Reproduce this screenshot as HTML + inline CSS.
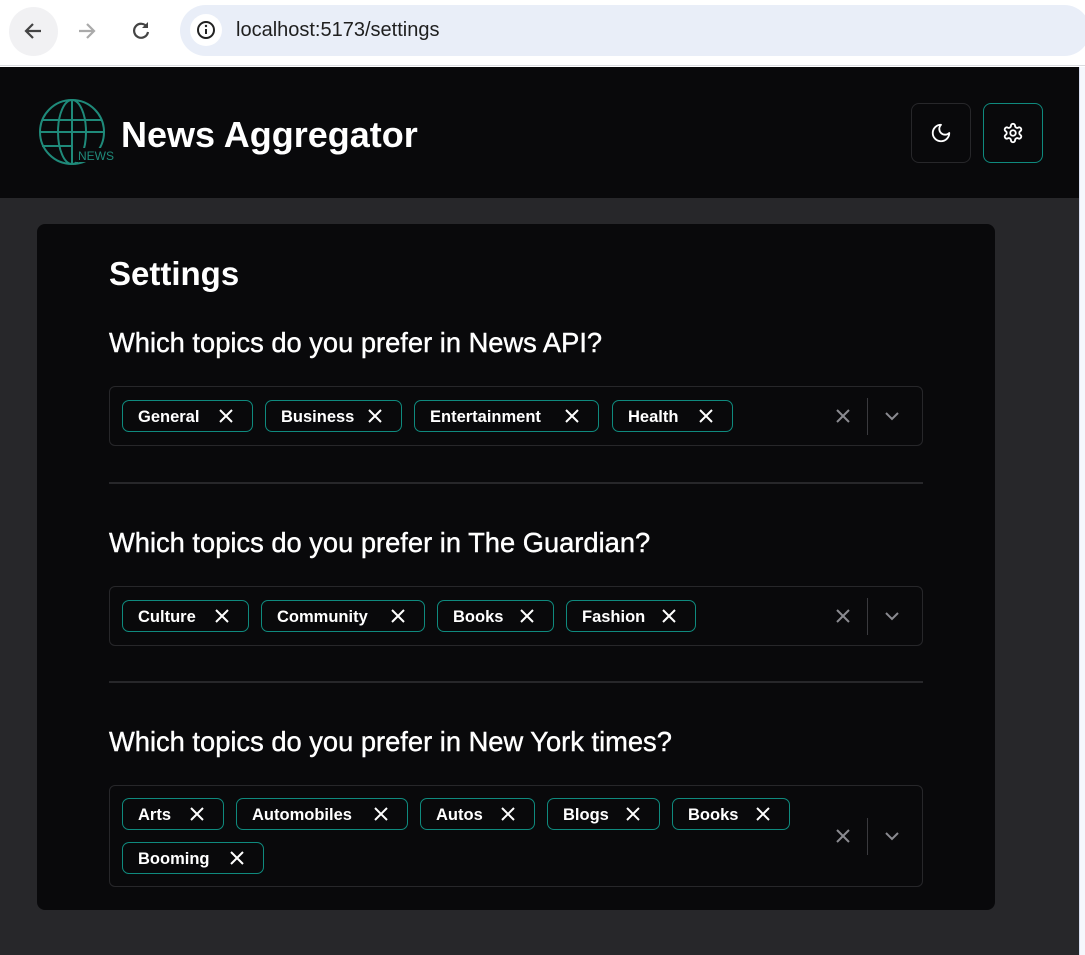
<!DOCTYPE html>
<html><head><meta charset="utf-8"><style>
*{box-sizing:border-box;margin:0;padding:0}
body{width:1085px;height:955px;overflow:hidden;background:#fff;font-family:"Liberation Sans",sans-serif;position:relative}
.chrome{position:absolute;left:0;top:0;width:1085px;height:66px;background:#fff;border-bottom:1px solid #dadce0}
.back{position:absolute;left:9px;top:7px;width:49px;height:49px;border-radius:50%;background:#f1f1f3}
.addr{position:absolute;left:180px;top:5px;width:910px;height:51px;border-radius:26px;background:#e9eef8}
.info{position:absolute;left:190px;top:14px;width:32px;height:32px;border-radius:50%;background:#fff}
.url{position:absolute;left:236px;top:19px;font-size:20px;color:#1f1f1f}
.page{position:absolute;left:0;top:67px;width:1079px;height:888px;background:#27272a}
.strip{position:absolute;left:1079px;top:67px;width:6px;height:888px;background:#f5f7fc;border-left:1px solid #d8def0}
.header{position:absolute;left:0;top:0;width:1079px;height:131px;background:#09090b}
.title{position:absolute;left:121px;top:47px;font-size:36px;font-weight:bold;color:#fff}
.btn{position:absolute;top:36px;width:60px;height:60px;border-radius:8px;border:1px solid #27272a;background:#09090b;display:flex;align-items:center;justify-content:center}
.card{position:absolute;left:37px;top:157px;width:958px;height:686px;background:#09090b;border-radius:8px}
h1{position:absolute;left:72px;top:31px;font-size:33px;color:#fff;font-weight:bold}
h2{position:absolute;left:72px;font-size:27.3px;color:#fff;font-weight:normal;-webkit-text-stroke:0.4px #fff}
.sel{position:absolute;left:72px;width:814px;border:1px solid #27272a;border-radius:6px}
.tag{position:absolute;height:32px;border:1px solid #0f8a7e;border-radius:7px;color:#fff;font-size:16.5px;font-weight:bold;padding-left:15px;line-height:32px}
.tag svg{position:absolute;right:18px;top:7px}
.ctl{position:absolute;right:0;top:0;width:90px;height:100%}
.hr{position:absolute;left:72px;width:814px;height:2px;background:#27272a}
</style></head><body>
<div class="chrome">
<div class="back"></div>
<svg style="position:absolute;left:22px;top:20px" width="22" height="22" viewBox="0 0 22 22"><path d="M19 11H4M11 4l-7 7 7 7" stroke="#444" stroke-width="2.2" fill="none"/></svg>
<svg style="position:absolute;left:76px;top:20px" width="22" height="22" viewBox="0 0 22 22"><path d="M3 11h15M11 4l7 7-7 7" stroke="#aaa" stroke-width="2.2" fill="none"/></svg>
<svg style="position:absolute;left:130px;top:19px" width="22" height="22" viewBox="0 0 22 22"><path d="M17 8A7 7 0 1 0 18 13" stroke="#444" stroke-width="2.2" fill="none"/><path d="M18 3v6h-6" fill="#444"/></svg>
<div class="addr"></div><div class="info"></div>
<svg style="position:absolute;left:196px;top:20px" width="20" height="20" viewBox="0 0 20 20"><circle cx="10" cy="10" r="8" stroke="#222" stroke-width="2" fill="none"/><path d="M10 9v5" stroke="#222" stroke-width="2"/><circle cx="10" cy="6" r="1.2" fill="#222"/></svg>
<div class="url">localhost:5173/settings</div>
</div>
<div class="strip"></div>
<div class="page">
<div class="header">
<svg style="position:absolute;left:39px;top:31px" width="78" height="70" viewBox="0 0 78 70">
<g stroke="#1f8a7a" stroke-width="2" fill="none">
<circle cx="33" cy="34" r="32"/>
<ellipse cx="33" cy="34" rx="14" ry="32"/>
<path d="M33 2v64M3 22h60M1 34h64M3 48h30"/>
</g>
<rect x="37" y="50" width="40" height="14" fill="#09090b"/>
<text x="39" y="62" font-family="Liberation Sans,sans-serif" font-size="12" fill="#1f8a7a">NEWS</text>
</svg>
<div class="title">News Aggregator</div>
<div class="btn" style="left:911px"><svg width="22" height="22" viewBox="0 0 24 24"><path d="M12 3a6 6 0 0 0 9 9 9 9 0 1 1-9-9z" stroke="#fff" stroke-width="2" fill="none" stroke-linejoin="round"/></svg></div>
<div class="btn" style="left:983px;border-color:#0f8a7e"><svg width="22" height="22" viewBox="0 0 24 24" fill="none" stroke="#fff" stroke-width="2" stroke-linejoin="round"><path d="M12.22 2h-.44a2 2 0 0 0-2 2v.18a2 2 0 0 1-1 1.730l-.43.25a2 2 0 0 1-2 0l-.15-.08a2 2 0 0 0-2.73.73l-.22.38a2 2 0 0 0 .73 2.73l.15.1a2 2 0 0 1 1 1.72v.51a2 2 0 0 1-1 1.74l-.15.09a2 2 0 0 0-.73 2.730l.22.38a2 2 0 0 0 2.73.73l.15-.08a2 2 0 0 1 2 0l.43.25a2 2 0 0 1 1 1.73V20a2 2 0 0 0 2 2h.44a2 2 0 0 0 2-2v-.18a2 2 0 0 1 1-1.73l.43-.25a2 2 0 0 1 2 0l.15.08a2 2 0 0 0 2.73-.73l.22-.39a2 2 0 0 0-.73-2.73l-.15-.08a2 2 0 0 1-1-1.74v-.5a2 2 0 0 1 1-1.74l.15-.09a2 2 0 0 0 .73-2.73l-.22-.38a2 2 0 0 0-2.73-.73l-.15.08a2 2 0 0 1-2 0l-.43-.25a2 2 0 0 1-1-1.730V4a2 2 0 0 0-2-2z"/><circle cx="12" cy="12" r="3"/></svg></div>
</div>
<div class="card">
<h1>Settings</h1>
<h2 style="top:103px">Which topics do you prefer in News API?</h2>
<div class="sel" style="top:162px;height:60px">
<div class="tag" style="left:12px;top:13px;width:131px">General<svg width="16" height="16" viewBox="0 0 16 16"><path d="M2 2l12 12M14 2L2 14" stroke="#fff" stroke-width="2"/></svg></div>
<div class="tag" style="left:155px;top:13px;width:137px">Business<svg width="16" height="16" viewBox="0 0 16 16"><path d="M2 2l12 12M14 2L2 14" stroke="#fff" stroke-width="2"/></svg></div>
<div class="tag" style="left:304px;top:13px;width:185px">Entertainment<svg width="16" height="16" viewBox="0 0 16 16"><path d="M2 2l12 12M14 2L2 14" stroke="#fff" stroke-width="2"/></svg></div>
<div class="tag" style="left:502px;top:13px;width:121px">Health<svg width="16" height="16" viewBox="0 0 16 16"><path d="M2 2l12 12M14 2L2 14" stroke="#fff" stroke-width="2"/></svg></div>
<div class="ctl"><svg style="position:absolute;left:3px;top:21px" width="16" height="16" viewBox="0 0 16 16"><path d="M2 2l12 12M14 2L2 14" stroke="#8a8a90" stroke-width="2"/></svg><div style="position:absolute;left:35px;top:11px;width:1px;height:37px;background:#3a3a3e"></div><svg style="position:absolute;left:52px;top:21px" width="16" height="16" viewBox="0 0 16 16"><path d="M2 5l6 6 6-6" stroke="#8a8a90" stroke-width="2" fill="none"/></svg></div>
</div>
<div class="hr" style="top:258px"></div>
<h2 style="top:303px">Which topics do you prefer in The Guardian?</h2>
<div class="sel" style="top:362px;height:60px">
<div class="tag" style="left:12px;top:13px;width:127px">Culture<svg width="16" height="16" viewBox="0 0 16 16"><path d="M2 2l12 12M14 2L2 14" stroke="#fff" stroke-width="2"/></svg></div>
<div class="tag" style="left:151px;top:13px;width:164px">Community<svg width="16" height="16" viewBox="0 0 16 16"><path d="M2 2l12 12M14 2L2 14" stroke="#fff" stroke-width="2"/></svg></div>
<div class="tag" style="left:327px;top:13px;width:117px">Books<svg width="16" height="16" viewBox="0 0 16 16"><path d="M2 2l12 12M14 2L2 14" stroke="#fff" stroke-width="2"/></svg></div>
<div class="tag" style="left:456px;top:13px;width:130px">Fashion<svg width="16" height="16" viewBox="0 0 16 16"><path d="M2 2l12 12M14 2L2 14" stroke="#fff" stroke-width="2"/></svg></div>
<div class="ctl"><svg style="position:absolute;left:3px;top:21px" width="16" height="16" viewBox="0 0 16 16"><path d="M2 2l12 12M14 2L2 14" stroke="#8a8a90" stroke-width="2"/></svg><div style="position:absolute;left:35px;top:11px;width:1px;height:37px;background:#3a3a3e"></div><svg style="position:absolute;left:52px;top:21px" width="16" height="16" viewBox="0 0 16 16"><path d="M2 5l6 6 6-6" stroke="#8a8a90" stroke-width="2" fill="none"/></svg></div>
</div>
<div class="hr" style="top:457px"></div>
<h2 style="top:502px">Which topics do you prefer in New York times?</h2>
<div class="sel" style="top:561px;height:102px">
<div class="tag" style="left:12px;top:12px;width:102px">Arts<svg width="16" height="16" viewBox="0 0 16 16"><path d="M2 2l12 12M14 2L2 14" stroke="#fff" stroke-width="2"/></svg></div>
<div class="tag" style="left:126px;top:12px;width:172px">Automobiles<svg width="16" height="16" viewBox="0 0 16 16"><path d="M2 2l12 12M14 2L2 14" stroke="#fff" stroke-width="2"/></svg></div>
<div class="tag" style="left:310px;top:12px;width:115px">Autos<svg width="16" height="16" viewBox="0 0 16 16"><path d="M2 2l12 12M14 2L2 14" stroke="#fff" stroke-width="2"/></svg></div>
<div class="tag" style="left:437px;top:12px;width:113px">Blogs<svg width="16" height="16" viewBox="0 0 16 16"><path d="M2 2l12 12M14 2L2 14" stroke="#fff" stroke-width="2"/></svg></div>
<div class="tag" style="left:562px;top:12px;width:118px">Books<svg width="16" height="16" viewBox="0 0 16 16"><path d="M2 2l12 12M14 2L2 14" stroke="#fff" stroke-width="2"/></svg></div>
<div class="tag" style="left:12px;top:56px;width:142px">Booming<svg width="16" height="16" viewBox="0 0 16 16"><path d="M2 2l12 12M14 2L2 14" stroke="#fff" stroke-width="2"/></svg></div>
<div class="ctl"><svg style="position:absolute;left:3px;top:42px" width="16" height="16" viewBox="0 0 16 16"><path d="M2 2l12 12M14 2L2 14" stroke="#8a8a90" stroke-width="2"/></svg><div style="position:absolute;left:35px;top:32px;width:1px;height:37px;background:#3a3a3e"></div><svg style="position:absolute;left:52px;top:42px" width="16" height="16" viewBox="0 0 16 16"><path d="M2 5l6 6 6-6" stroke="#8a8a90" stroke-width="2" fill="none"/></svg></div>
</div>
</div>
</div>
</body></html>
